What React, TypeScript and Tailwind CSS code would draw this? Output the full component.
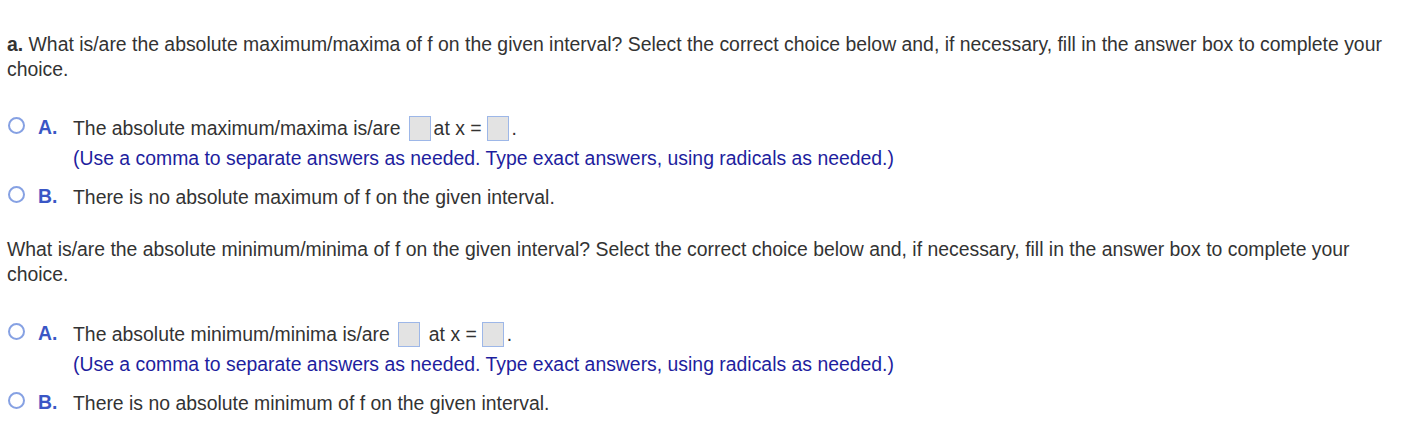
import React from "react";

function Radio() {
  return (
    <span className="inline-block w-[17px] h-[17px] rounded-full border-2 border-[#86a1e3] bg-white shrink-0 -translate-y-[3px]" />
  );
}

function Box() {
  return <span className="inline-block w-[22px] h-[25px] bg-[#e3e3e3] border border-[#9db7e8] align-middle" />;
}

function Option({ letter, children, hint }: { letter: string; children: React.ReactNode; hint?: boolean }) {
  return (
    <div className="flex items-start">
      <div className="flex items-center h-[25px] w-[73px] pl-[8px]">
        <Radio />
        <span className="ml-[13px] -mt-[3px] font-bold text-[#3a56c5] text-[19.4px]">{letter}</span>
      </div>
      <div>
        <div className="h-[25px] flex items-center">{children}</div>
        {hint && (
          <div className="mt-[5px] h-[25px] flex items-center text-[#1e1e9e]">
            (Use a comma to separate answers as needed. Type exact answers, using radicals as needed.)
          </div>
        )}
      </div>
    </div>
  );
}

export default function App() {
  return (
    <div
      className="w-[1421px] h-[446px] bg-white text-[#333333] text-[19.4px] leading-[25px] pl-[7px] pt-[32px]"
      style={{ fontFamily: '"Liberation Sans", Arial, sans-serif' }}
    >
      <p className="pr-[20px]">
        <span className="font-bold">a.</span> What is/are the absolute maximum/maxima of f on the given interval? Select the correct choice below and, if necessary, fill in the answer box to complete your choice.
      </p>
      <div className="mt-[34px] -ml-[7px] flex flex-col gap-[14px]">
        <Option letter="A." hint>
          <span>The absolute maximum/maxima is/are</span>
          <span className="ml-[8px] flex"><Box /></span>
          <span className="ml-[3px]">at x =</span>
          <span className="ml-[5px] flex"><Box /></span>
          <span className="ml-[3px]">.</span>
        </Option>
        <Option letter="B.">
          <span>There is no absolute maximum of f on the given interval.</span>
        </Option>
      </div>
      <p className="mt-[27px] pr-[20px]">
        What is/are the absolute minimum/minima of f on the given interval? Select the correct choice below and, if necessary, fill in the answer box to complete your choice.
      </p>
      <div className="mt-[35px] -ml-[7px] flex flex-col gap-[14px]">
        <Option letter="A." hint>
          <span>The absolute minimum/minima is/are</span>
          <span className="ml-[8px] flex"><Box /></span>
          <span className="ml-[9px]">at x =</span>
          <span className="ml-[5px] flex"><Box /></span>
          <span className="ml-[3px]">.</span>
        </Option>
        <Option letter="B.">
          <span>There is no absolute minimum of f on the given interval.</span>
        </Option>
      </div>
    </div>
  );
}
